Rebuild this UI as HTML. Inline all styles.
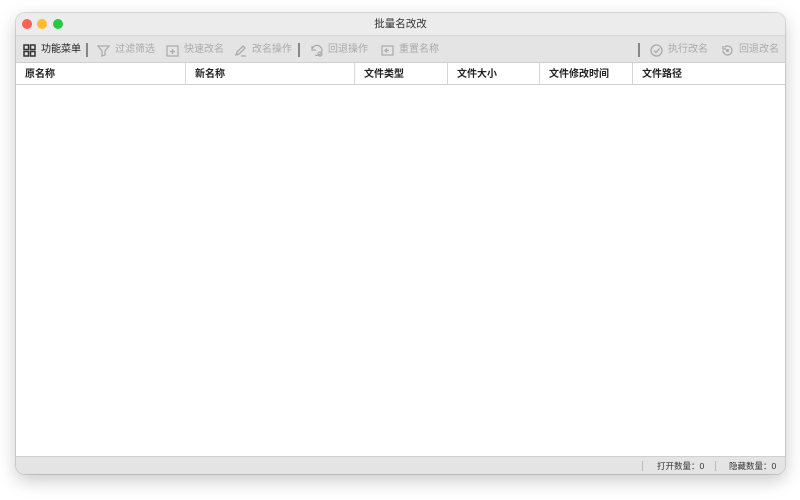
<!DOCTYPE html>
<html><head><meta charset="utf-8"><style>
*{margin:0;padding:0;box-sizing:border-box}
body{width:800px;height:500px;background:#fff;font-family:"Liberation Sans","Noto Sans CJK SC",sans-serif;position:relative;overflow:hidden}
.win{position:absolute;left:16px;top:13px;width:769px;height:461px;border-radius:9px;background:#fff;box-shadow:0 6px 18px rgba(0,0,0,.22),0 0 0 1px rgba(0,0,0,.12);overflow:hidden}
.title{height:22px;background:#ececec;text-align:center;font-size:10.5px;line-height:22px;color:#333;position:relative}
.dot{position:absolute;top:6px;width:10px;height:10px;border-radius:50%}
.tb{height:28px;background:#e4e4e4;border-top:1px solid #d6d6d6;border-bottom:1px solid #cfcfcf;position:relative;font-size:10px;color:#aaa}
.it{position:absolute;top:1px;height:26px;line-height:26px;display:flex;align-items:center;gap:5px}
.it svg{width:13px;height:13px}
.sep{position:absolute;top:7px;width:2px;height:14px;background:#888}
.hdr{height:22px;border-bottom:1px solid #d0d0d0;position:relative;font-size:10px;font-weight:bold;color:#222}
.hdr div{position:absolute;top:0;height:22px;line-height:24px;padding-left:9px;border-left:1px solid #d8d8d8}
.st{position:absolute;left:0;bottom:0;width:100%;height:18px;background:#e4e4e4;border-top:1px solid #cfcfcf;font-size:8.5px;color:#333}
.st span{position:absolute;top:0;line-height:18px}
.st i{position:absolute;top:4px;width:1px;height:10px;background:#bbb}
</style></head><body>
<div class="win">
<div class="title"><span class="dot" style="left:6px;background:#fe5f57"></span><span class="dot" style="left:21px;background:#febc2e"></span><span class="dot" style="left:37px;background:#28c840"></span>批量名改改</div>
<div class="tb">
<div class="it" style="left:7px;color:#222"><svg viewBox="0 0 13 13" fill="none" stroke="#333" stroke-width="1.5"><rect x="1" y="1" width="4.5" height="4.5"/><rect x="7.5" y="1" width="4.5" height="4.5"/><rect x="1" y="7.5" width="4.5" height="4.5"/><rect x="7.5" y="7.5" width="4.5" height="4.5"/></svg>功能菜单</div>
<div class="sep" style="left:70px"></div>
<div class="it" style="left:81px"><svg viewBox="0 0 13 13" fill="none" stroke="#aaa" stroke-width="1.2"><path d="M1 2h11L8 7v4l-3 1V7z"/></svg>过滤筛选</div>
<div class="it" style="left:150px"><svg viewBox="0 0 13 13" fill="none" stroke="#aaa" stroke-width="1.2"><rect x="1" y="2" width="11" height="10"/><path d="M6.5 5v5M4 7.5h5"/></svg>快速改名</div>
<div class="it" style="left:218px"><svg viewBox="0 0 13 13" fill="none" stroke="#aaa" stroke-width="1.3"><path d="M2 11l1-3 6-6 2 2-6 6zM7 12h5"/></svg>改名操作</div>
<div class="sep" style="left:282px"></div>
<div class="it" style="left:294px"><svg viewBox="0 0 13 13" fill="none" stroke="#aaa" stroke-width="1.2"><path d="M2 6a5 5 0 1 1 3 5M2 2v4h4"/><circle cx="10" cy="10" r="2"/></svg>回退操作</div>
<div class="it" style="left:365px"><svg viewBox="0 0 13 13" fill="none" stroke="#aaa" stroke-width="1.2"><rect x="1" y="2" width="11" height="9"/><path d="M8 6.5H4l2-2M4 6.5l2 2"/></svg>重置名称</div>
<div class="sep" style="left:622px"></div>
<div class="it" style="left:634px"><svg viewBox="0 0 13 13" fill="none" stroke="#aaa" stroke-width="1.3"><circle cx="6.5" cy="6.5" r="5.5"/><path d="M4 6.5l2 2 3.5-4"/></svg>执行改名</div>
<div class="it" style="left:705px"><svg viewBox="0 0 13 13" fill="none" stroke="#aaa" stroke-width="1.3"><path d="M2 6.5a4.5 4.5 0 1 0 1.5-3.4M2 2v3h3"/><circle cx="6.5" cy="6.5" r="1" fill="#aaa"/></svg>回退改名</div>
</div>
<div class="hdr">
<div style="left:0;border-left:none">原名称</div>
<div style="left:169px">新名称</div>
<div style="left:338px">文件类型</div>
<div style="left:431px">文件大小</div>
<div style="left:523px">文件修改时间</div>
<div style="left:616px">文件路径</div>
</div>
<div class="st"><i style="left:626px"></i><span style="left:641px">打开数量：0</span><i style="left:699px"></i><span style="left:713px">隐藏数量：0</span></div>
</div>
</body></html>
